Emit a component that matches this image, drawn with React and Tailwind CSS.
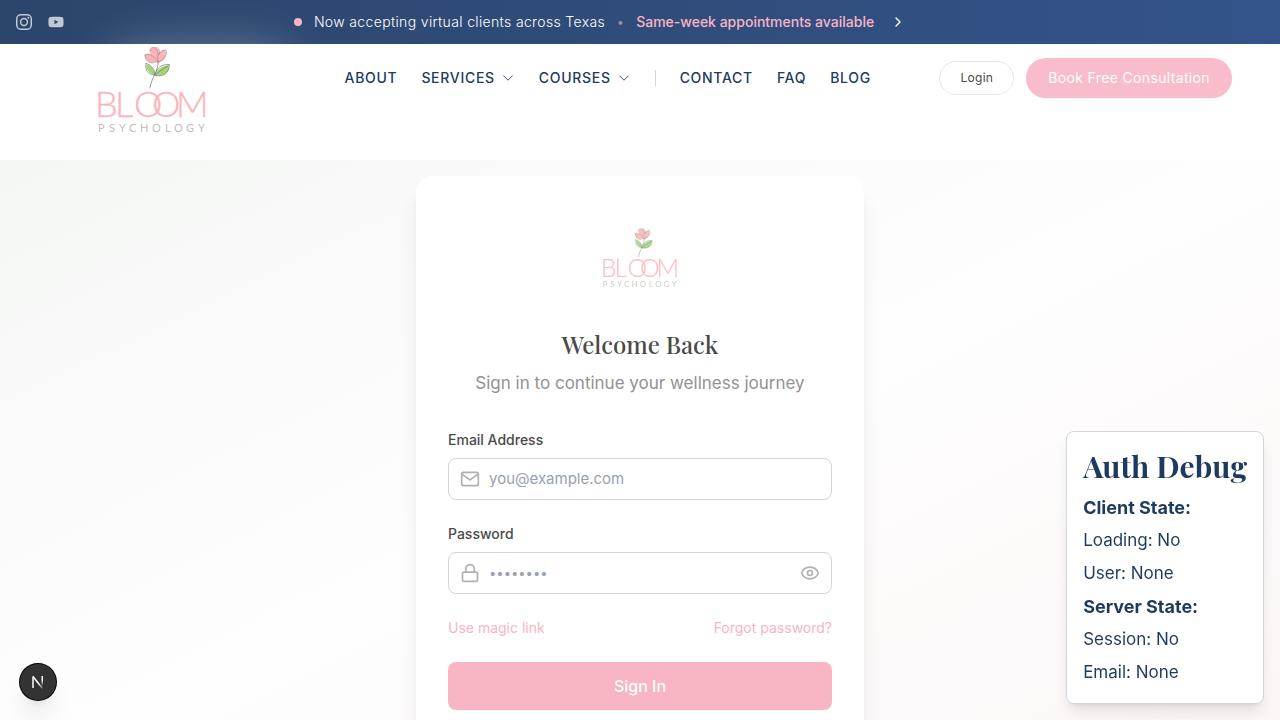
import { useState } from "react";
import { ChevronRight, Lock, Eye } from "lucide-react";
import { HiOutlineChevronDown } from "react-icons/hi2";
import { FiMail } from "react-icons/fi";
import { FaYoutube } from "react-icons/fa";

function Logo({ className }) {
  return (
    <svg viewBox="-4 0 116 92" className={className} role="img" aria-label="Bloom Psychology">
      <g strokeLinecap="round" strokeLinejoin="round">
        <path d="M47 11C48 9 51 11 53 10C50 6 52 4 56 3.5C60 4 62 7 60 10C62 8 64 6 67 6C69 11 67 17 61 18.5C54 20 47 18 47 11Z" fill="#fbb4b9" />
        <path d="M47 11C47 16 50 19 55 19M52 7C51 5 54 3 56 3.5C60 3 63 6 61 10M47 11C51 8 57 13 60 18M61 10C63 7 65 6 68 6C69 11 67 16 60 18M61 10C59 12 60 15 60 18M57 5C60 6 60 8 60 10" fill="none" stroke="#95807f" strokeWidth="0.6" />
        <path d="M48.5 20.5C54 22 57 26 56.5 31C51 29 48 26 48.5 20.5Z" fill="#a5d476" />
        <path d="M57 31C60 24 65 21.5 71 21.5C71 29 66 33 57 31Z" fill="#a5d476" />
        <path d="M60 18C61 26 53 34 52 44M48 19.5C54 21 57 26 56.5 30.5M48 19.5C47 27 50 30 56 31M57 31.5C60 28 65 25 70 22M57 31.5C58 24 64 20 71.5 20.5C71 29 66 33 57 31.5" fill="none" stroke="#737a70" strokeWidth="0.7" />
      </g>
      <text x="-3 17 36 54 78" y="73" strokeWidth="0.3" className="fill-[#fbb4b9] stroke-[#fbb4b9] font-['Lato'] text-[36px] font-light">BLOOM</text>
      <text x="0 11 21 31 42 54 67 76 88 100" y="88" className="fill-[#c5bcbf] font-['Lato'] text-[11px]">PSYCHOLOGY</text>
    </svg>
  );
}

const linkCls = "flex items-center gap-1.5 text-[#1e3a5f]";
const fieldCls = "mt-2 flex h-[42px] items-center rounded-lg border border-gray-300 px-[11px]";

export default function App() {
  const [shown, setShown] = useState(false);
  return (
    <div className="flex min-h-screen flex-col font-['Inter',sans-serif] text-[#1e3a5f]">
      <div className="flex h-11 items-center bg-linear-to-r from-[#2b456b] to-[#34538a] px-4">
        <div className="flex flex-1 gap-4 text-white/70">
          <a href="#instagram" aria-label="Instagram">
            <svg viewBox="0 0 16 16" className="size-4" fill="none" stroke="currentColor" strokeWidth="1.5">
              <rect x="0.75" y="0.75" width="14.5" height="14.5" rx="4" />
              <circle cx="8" cy="8" r="3.4" />
              <circle cx="12.3" cy="3.8" r="1" fill="currentColor" stroke="none" />
            </svg>
          </a>
          <a href="#youtube" aria-label="YouTube"><FaYoutube className="size-4" /></a>
        </div>
        <a href="#appointments" className="flex items-center pr-20 text-sm tracking-wide text-white">
          <span className="mr-3 size-2 rounded-full bg-[#f8b5c4]" />
          <span className="font-light">Now accepting virtual clients across Texas</span>
          <span className="mx-3 text-xs text-[#f8b5c4]/60">•</span>
          <span className="font-medium tracking-normal text-[#f8b5c4]">Same-week appointments available</span>
          <ChevronRight className="ml-4 size-4" />
        </a>
        <div className="flex-1" />
      </div>

      <header className="flex h-[116px] items-start justify-between bg-white px-12">
        <a href="#home" className="relative w-[228px] pl-[46px]">
          <span className="absolute top-1 left-14 h-20 w-48 rounded-full bg-white/30 blur-xl" />
          <Logo className="relative h-[92px] w-[116px]" />
        </a>
        <nav className="flex h-[68px] items-center gap-6 text-sm font-medium tracking-wider">
          <a href="#about" className={linkCls}>ABOUT</a>
          <a href="#services" className={linkCls}>SERVICES <HiOutlineChevronDown className="size-3.5" /></a>
          <a href="#courses" className={linkCls}>COURSES <HiOutlineChevronDown className="size-3.5" /></a>
          <span className="h-4 w-px bg-gray-300" />
          <a href="#contact" className={linkCls}>CONTACT</a>
          <a href="#faq" className={linkCls}>FAQ</a>
          <a href="#blog" className={linkCls}>BLOG</a>
        </nav>
        <div className="flex h-[68px] items-center gap-3">
          <button className="rounded-full border border-gray-200 px-5 py-2 text-xs tracking-wide text-[#4a4a4a]">Login</button>
          <button className="rounded-full bg-[#f9bccb] px-[22px] py-[10px] text-sm tracking-wide text-white shadow-xs">Book Free Consultation</button>
        </div>
      </header>

      <main className="flex flex-1 flex-col items-center bg-linear-to-br from-[#f5f7f5] via-[#fefefe] to-[#fdf5f6] px-4 pt-4 pb-12">
        <div className="w-full max-w-md rounded-2xl bg-white p-8 shadow-xl">
          <div className="flex justify-center pt-[18px]">
            <Logo className="h-16 w-20 opacity-85" />
          </div>
          <h1 className="mt-[38px] text-center font-['Playfair_Display','Liberation_Serif',serif] text-2xl leading-8 font-medium text-[#4a4a4a]">Welcome Back</h1>
          <p className="mt-2 text-center text-[17px] leading-[30px] text-[#929292]">Sign in to continue your wellness journey</p>
          <form className="mt-8" onSubmit={(e) => e.preventDefault()}>
            <label htmlFor="email" className="block text-sm font-medium text-[#4a4a4a]">Email Address</label>
            <div className={fieldCls}>
              <FiMail className="size-5 text-[#b0b0b0]" />
              <input id="email" type="email" placeholder="you@example.com" className="ml-[9px] min-w-0 flex-1 text-[15px] outline-none placeholder:text-gray-400" />
            </div>
            <label htmlFor="password" className="mt-6 block text-sm font-medium text-[#4a4a4a]">Password</label>
            <div className={fieldCls}>
              <Lock className="size-5 text-[#b0b0b0]" />
              <input id="password" type={shown ? "text" : "password"} placeholder="••••••••" className="ml-[9px] min-w-0 flex-1 text-[15px] outline-none placeholder:text-[13px] placeholder:text-gray-400" />
              <button type="button" aria-label="Show password" onClick={() => setShown(!shown)} className="text-[#b0b0b0]">
                <Eye className="size-5" />
              </button>
            </div>
            <div className="mt-6 flex justify-between text-sm text-[#f8b5c4]">
              <a href="#magic">Use magic link</a>
              <a href="#forgot">Forgot password?</a>
            </div>
            <button type="submit" className="mt-6 h-12 w-full rounded-lg bg-[#f8b5c4] font-medium text-white">Sign In</button>
          </form>
        </div>
      </main>

      <aside className="fixed right-4 bottom-4 rounded-lg border border-gray-300 bg-white px-4 pt-4 pb-[14px] text-[17px] leading-[33px] shadow-lg">
        <h3 className="mb-[7px] font-['Playfair_Display','Liberation_Serif',serif] text-3xl leading-9 font-bold">Auth Debug</h3>
        <p className="text-lg leading-[33px] font-bold">Client State:</p>
        <p>Loading: No</p>
        <p>User: None</p>
        <p className="text-lg leading-[33px] font-bold">Server State:</p>
        <p>Session: No</p>
        <p>Email: None</p>
      </aside>

      <button aria-label="Open developer tools" className="fixed bottom-5 left-5 flex size-9 items-center justify-center rounded-full bg-[#333] shadow-xl ring-1 ring-black">
        <svg viewBox="0 0 14 14" className="size-3.5" fill="none" strokeWidth="1.5">
          <defs>
            <linearGradient id="fade" x1="0" y1="0" x2="0" y2="1">
              <stop offset="0.4" stopColor="#fff" />
              <stop offset="1" stopColor="#fff" stopOpacity="0" />
            </linearGradient>
            <linearGradient id="slant" x1="0" y1="0" x2="1" y2="1">
              <stop offset="0.6" stopColor="#fff" />
              <stop offset="1" stopColor="#fff" stopOpacity="0.2" />
            </linearGradient>
          </defs>
          <path d="M2 13V1.5" stroke="#fff" />
          <path d="M2 1.5L11.5 13.5" stroke="url(#slant)" />
          <rect x="10.5" y="1" width="1.5" height="10" fill="url(#fade)" />
        </svg>
      </button>
    </div>
  );
}
